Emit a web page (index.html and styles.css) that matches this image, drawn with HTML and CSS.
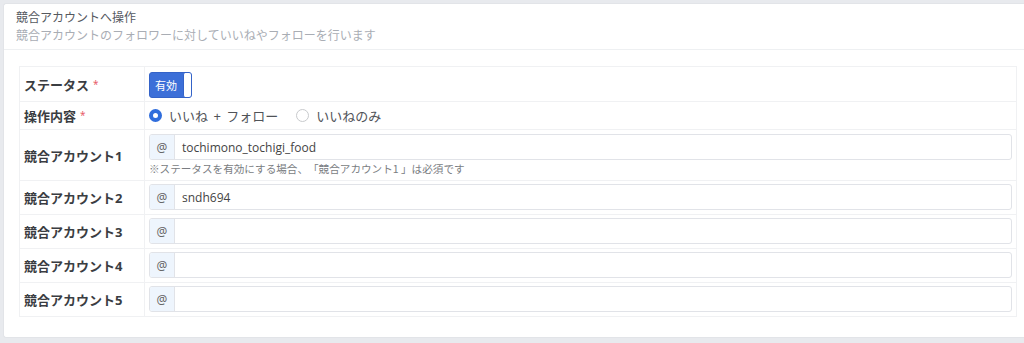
FILE: index.html
```html
<!DOCTYPE html>
<html lang="ja">
<head>
<meta charset="utf-8">
<link rel="stylesheet" href="styles.css">
</head>
<body>
<div class="card">
  <div class="card-header">
    <div class="title">競合アカウントへ操作</div>
    <div class="subtitle">競合アカウントのフォロワーに対していいねやフォローを行います</div>
  </div>
  <div class="card-body">
    <table class="form-table">
      <tr class="row-status">
        <th>ステータス<span class="req">*</span></th>
        <td>
          <div class="toggle"><span class="toggle-on">有効</span><span class="toggle-handle"></span></div>
        </td>
      </tr>
      <tr class="row-radio">
        <th>操作内容<span class="req">*</span></th>
        <td>
          <div class="radios">
            <label class="radio"><span class="dot checked"></span>いいね&nbsp;+ フォロー</label>
            <label class="radio"><span class="dot"></span>いいねのみ</label>
          </div>
        </td>
      </tr>
      <tr class="row-first">
        <th>競合アカウント1</th>
        <td>
          <div class="input-group"><span class="addon">@</span><span class="field">tochimono_tochigi_food</span></div>
          <div class="help">※ステータスを有効にする場合、「競合アカウント1&nbsp;」は必須です</div>
        </td>
      </tr>
      <tr>
        <th>競合アカウント2</th>
        <td><div class="input-group"><span class="addon">@</span><span class="field">sndh694</span></div></td>
      </tr>
      <tr>
        <th>競合アカウント3</th>
        <td><div class="input-group"><span class="addon">@</span><span class="field"></span></div></td>
      </tr>
      <tr>
        <th>競合アカウント4</th>
        <td><div class="input-group"><span class="addon">@</span><span class="field"></span></div></td>
      </tr>
      <tr>
        <th>競合アカウント5</th>
        <td><div class="input-group"><span class="addon">@</span><span class="field"></span></div></td>
      </tr>
    </table>
  </div>
</div>
</body>
</html>
```

FILE: styles.css
```css
* { box-sizing: border-box; }
html, body { margin: 0; padding: 0; }
body {
  background: #e8eaee;
  padding: 3px 0 0 3px;
  font-family: "Noto Sans", "Noto Sans CJK JP", sans-serif;
  color: #333;
  height: 343px;
  overflow: hidden;
  text-spacing-trim: space-all;
}
.card {
  background: #fff;
  border: 1px solid #e2e4e8;
  border-right: none;
  border-radius: 3px 0 0 3px;
  height: 335px;
}
.card-header {
  height: 46px;
  padding: 5px 12px 0 12px;
  border-bottom: 1px solid #eef0f2;
}
.title {
  font-size: 12px;
  line-height: 18px;
  color: #55595f;
}
.subtitle {
  font-size: 12px;
  line-height: 18px;
  color: #a9adb4;
}
.card-body {
  padding: 16px 6px 0 15px;
}
.form-table {
  width: 998px;
  border-collapse: collapse;
  border: 1px solid #f0f1f3;
}
.form-table th {
  width: 125px;
  text-align: left;
  font-size: 13px;
  font-weight: bold;
  color: #3a3d42;
  padding: 0 4px;
  border: 1px solid #f0f1f3;
  vertical-align: middle;
}
.form-table td {
  padding: 3px 4px 4px 4px;
  border: 1px solid #f0f1f3;
  vertical-align: middle;
}
.req { color: #e8606a; font-size: 10px; font-weight: normal; margin-left: 4px; vertical-align: 2px; }
.row-status td { padding: 4px 4px 3px 4px; height: 35px; }
.toggle {
  width: 43px;
  height: 26px;
  border-radius: 3px;
  background: #3c6fd8;
  border: 1px solid #3463c8;
  display: flex;
  align-items: stretch;
  overflow: hidden;
}
.toggle-on {
  flex: 1;
  color: #fff;
  font-size: 11px;
  display: flex;
  align-items: center;
  justify-content: center;
  padding-right: 1px;
}
.toggle-handle {
  width: 8px;
  background: #fff;
  border-radius: 2px 0 0 2px;
  border-left: 1px solid #3463c8;
}
.row-radio td { height: 28px; padding: 1px 4px; }
.radios { display: flex; gap: 18px; align-items: center; }
.radio {
  display: flex;
  align-items: center;
  gap: 7px;
  font-size: 13px;
  color: #505358;
  word-spacing: 2px;
}
.dot {
  width: 13px;
  height: 13px;
  border-radius: 50%;
  border: 1px solid #c8cacd;
  background: #fff;
}
.dot.checked { border: 4px solid #2f6ddc; }
.row-first td { padding-top: 4px; padding-bottom: 4px; }
.input-group {
  display: flex;
  height: 26px;
  border: 1px solid #e1e3e8;
  border-radius: 3px;
  overflow: hidden;
}
.addon {
  width: 25px;
  background: #eef5fd;
  border-right: 1px solid #e1e3e8;
  display: flex;
  align-items: center;
  justify-content: center;
  font-size: 12px;
  color: #666;
}
.field {
  flex: 1;
  display: flex;
  align-items: center;
  padding-left: 7px;
  font-size: 12px;
  color: #444;
  font-family: "Open Sans", "Noto Sans", sans-serif;
}
.help {
  font-family: "Noto Sans CJK JP", sans-serif;
  font-size: 10.6px;
  line-height: 15px;
  color: #7a7d82;
  padding-top: 1px;
}
```
